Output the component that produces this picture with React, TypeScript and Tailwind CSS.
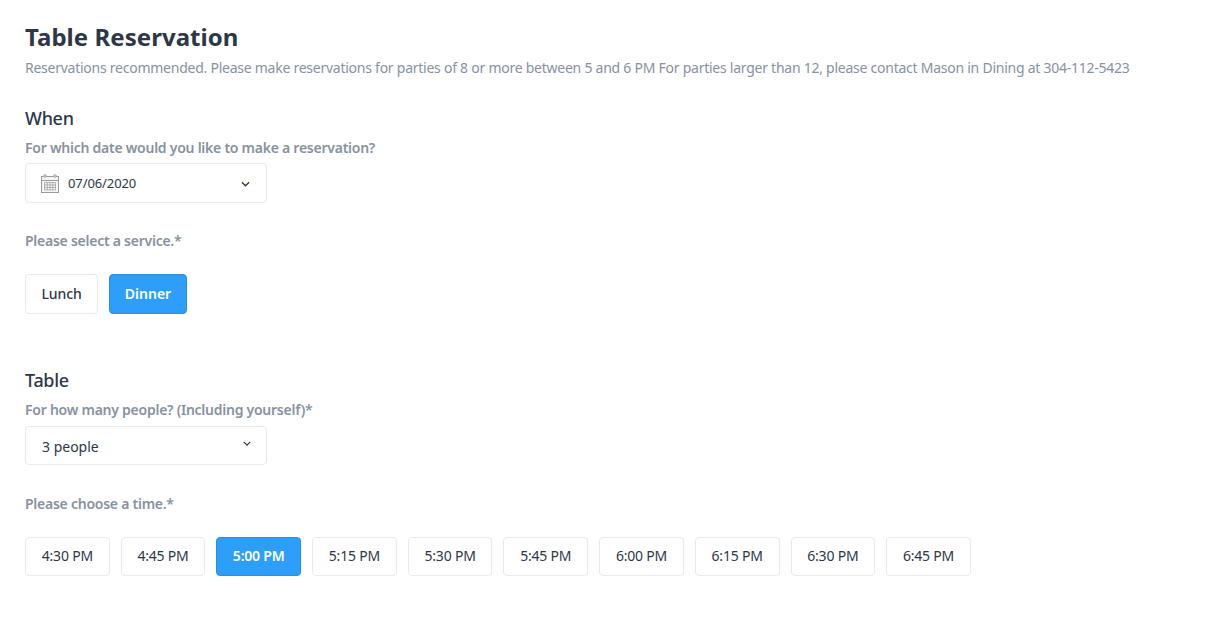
import React from "react";

const times = ["4:30 PM", "4:45 PM", "5:00 PM", "5:15 PM", "5:30 PM", "5:45 PM", "6:00 PM", "6:15 PM", "6:30 PM", "6:45 PM"];

function Chevron({ className }: { className: string }) {
  return (
    <svg viewBox="0 0 10 6" className={className} fill="none" stroke="#2d3748" strokeWidth="1.5">
      <path d="M1 1l4 4 4-4" />
    </svg>
  );
}

function CalendarIcon() {
  return (
    <svg viewBox="0 0 18 19" className="w-[18px] h-[19px]" fill="none" stroke="#9a9a9a" strokeWidth="1">
      <rect x="0.5" y="2.5" width="17" height="16" fill="#f6f6f6" />
      <path d="M0.5 6.5h17" />
      <circle cx="4" cy="2" r="1.3" fill="#fff" />
      <circle cx="14" cy="2" r="1.3" fill="#fff" />
      <path d="M3.5 8.5h11v7.5h-11zM3.5 11h11M3.5 13.5h11M6.2 8.5v7.5M9 8.5v7.5M11.8 8.5v7.5" strokeWidth="0.7" />
    </svg>
  );
}

export default function App() {
  const label = "text-[14px] leading-[20px] font-semibold text-[#8792a2] tracking-[-0.25px]";
  const heading = "text-[18px] leading-[24px] font-medium text-[#2d3748] tracking-[-0.3px]";
  const btn = "rounded border border-[#e8eaed] bg-white text-[#2d3748] text-[14px] pb-[2px] flex items-center justify-center";
  const active = "rounded border border-[#2b8fe0] bg-[#2d9ffb] text-white text-[14px] font-semibold pb-[2px] flex items-center justify-center";
  return (
    <div className="bg-white min-h-[625px] pl-[25px] pt-[21px] font-['Noto_Sans',sans-serif]">
      <h1 className="text-[24px] leading-[32px] font-bold text-[#2d3748] tracking-[0.05px]">Table Reservation</h1>
      <p className="text-[14px] leading-[20px] text-[#8792a2] mt-[5px] tracking-[-0.25px]">
        Reservations recommended. Please make reservations for parties of 8 or more between 5 and 6 PM For parties larger than 12, please contact Mason in Dining at 304-112-5423
      </p>
      <h2 className={heading + " mt-[28px]"}>When</h2>
      <div className={label + " mt-[8px]"}>For which date would you like to make a reservation?</div>
      <div className="mt-[5px] w-[242px] h-[40px] rounded border border-[#e8eaed] flex items-center pl-[15px] pr-[16px]">
        <CalendarIcon />
        <span className="ml-[9px] pt-[2px] text-[13px] text-[#2d3748] tracking-[-0.1px]">07/06/2020</span>
        <Chevron className="ml-auto mt-[1px] w-[9px] h-[6px]" />
      </div>
      <div className={label + " mt-[28px]"}>Please select a service.*</div>
      <div className="flex gap-[11px] mt-[23px]">
        <div className={btn + " w-[73px] h-[40px] font-medium tracking-[-0.1px]"}>Lunch</div>
        <div className={active + " w-[78px] h-[40px]"}>Dinner</div>
      </div>
      <h2 className={heading + " mt-[54px]"}>Table</h2>
      <div className={label + " mt-[8px]"}>For how many people? (Including yourself)*</div>
      <div className="mt-[6px] w-[242px] h-[39px] rounded border border-[#e8eaed] flex items-center pl-[16px] pr-[15px]">
        <span className="pt-[2px] text-[14px] text-[#2d3748]">3 people</span>
        <Chevron className="ml-auto w-[8px] h-[5px] mb-[4px]" />
      </div>
      <div className={label + " mt-[29px]"}>Please choose a time.*</div>
      <div className="flex gap-[11px] mt-[23px]">
        {times.map((t) => (
          <div key={t} className={(t === "5:00 PM" ? active : btn) + " w-[84.7px] h-[39px] tracking-[-0.2px]"}>{t}</div>
        ))}
      </div>
    </div>
  );
}
